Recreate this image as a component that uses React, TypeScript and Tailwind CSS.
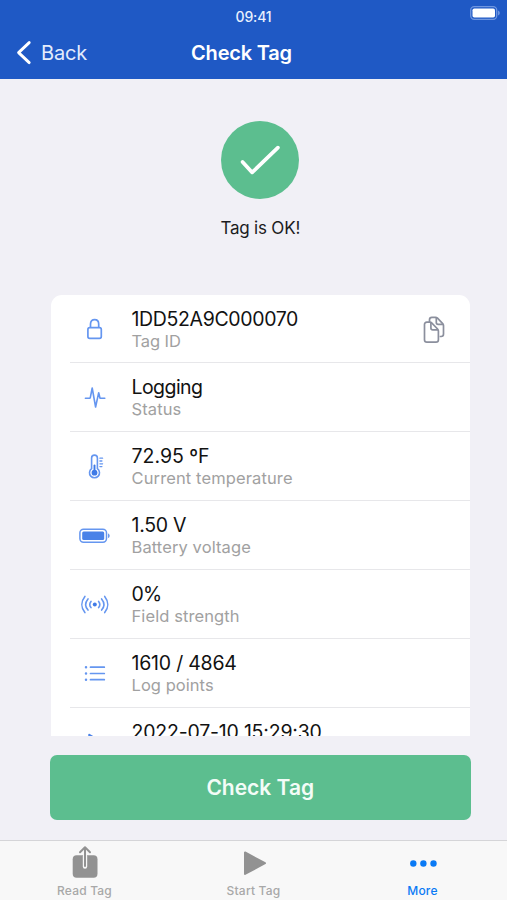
import React from 'react';

function LockIcon() {
  return (
    <svg width="32" height="28" viewBox="0 0 32 28" fill="none" stroke="#6596f0" strokeWidth="1.700">
      <path d="M11.500 12.600V9c0-2.900 1.800-4.400 4.100-4.400S19.700 6.100 19.700 9v3.600" />
      <rect x="8.900" y="12.600" width="13.400" height="10.700" rx="1.800" />
    </svg>
  );
}

function PulseIcon() {
  return (
    <svg width="32" height="28" viewBox="0 0 32 28" fill="none" stroke="#6596f0" strokeWidth="1.600" strokeLinecap="round" strokeLinejoin="round">
      <path d="M6.400 15.300h4.100c.5 0 .7-.2.800-.7L13.200 5l3.400 19 3.100-14.300 1.200 5c.1.400.4.600.8.600h4.100" />
    </svg>
  );
}

function ThermometerIcon() {
  return (
    <svg width="32" height="28" viewBox="0 0 32 28" fill="none" stroke="#6596f0" strokeWidth="1.600" strokeLinecap="round">
      <path d="M12.600 16.700V6a2.900 2.900 0 0 1 5.800 0v10.700a5 5 0 1 1-5.800 0Z" />
      <circle cx="15.500" cy="20.700" r="2.900" fill="#3f7ae6" stroke="none" />
      <path d="M15.500 19v-5.500" stroke="#3f7ae6" strokeWidth="1.900" />
      <path d="M20.900 6.200h2.700M20.900 9h2M20.900 11.800h2.700M20.900 14.600h2" strokeWidth="1.300" />
    </svg>
  );
}

function BatteryIcon() {
  return (
    <svg width="32" height="28" viewBox="0 0 32 28" fill="none">
      <rect x="0.900" y="8.200" width="26.600" height="13" rx="3.600" stroke="#6596f0" strokeWidth="1.500" />
      <rect x="3.200" y="10.500" width="22" height="8.400" rx="1.500" fill="#4a82e8" />
      <path d="M29.100 12.400v4.600c1-.3 1.500-1.300 1.500-2.300s-.5-2-1.500-2.300Z" fill="#5a8dea" />
    </svg>
  );
}

function SignalIcon() {
  return (
    <svg width="32" height="28" viewBox="0 0 32 28" fill="none" stroke="#6596f0" strokeWidth="1.600" strokeLinecap="round">
      <circle cx="15.800" cy="14.500" r="2" fill="#3f7ae6" stroke="none" />
      <path d="M12 11.400c-1.500 1.900-1.500 4.300 0 6.200M19.600 11.400c1.500 1.900 1.500 4.300 0 6.200" />
      <path d="M9 8.900c-2.900 3.500-2.900 7.700 0 11.200M22.600 8.900c2.900 3.500 2.900 7.700 0 11.200" />
      <path d="M5.900 6.400c-4 5-4 11.200 0 16.200M25.700 6.400c4 5 4 11.200 0 16.200" />
    </svg>
  );
}

function ListIcon() {
  return (
    <svg width="32" height="28" viewBox="0 0 32 28" fill="none" stroke="#6596f0" strokeLinecap="round">
      <path d="M11.500 8.200h13.800M11.500 14.500h13.800M11.500 20.700h13.800" strokeWidth="1.700" />
      <path d="M7 8.200h.01M7 14.500h.01M7 20.700h.01" strokeWidth="2.500" />
    </svg>
  );
}

function PlayFilledIcon() {
  return (
    <svg width="32" height="28" viewBox="0 0 32 28" fill="#4a82e8" stroke="#4a82e8" strokeWidth="1.500" strokeLinejoin="round">
      <path d="M10 6.500v16l14-8Z" />
    </svg>
  );
}

function CopyIcon() {
  return (
    <svg width="24" height="28" viewBox="0 0 24 28" fill="none" stroke="#8b8f9d" strokeWidth="1.700" strokeLinejoin="round">
      <path d="M7.500 7V4.700c0-1.600.8-2.400 2.400-2.400h3.600c.8 0 1.400.3 2 .9l5.200 5.400c.6.600.8 1.200.8 2v8.500c0 1.600-.8 2.400-2.400 2.400h-1.500" />
      <path d="M14.300 2.500v5c0 1.300.6 1.900 1.900 1.900h5" />
      <path d="M4.900 7.200h2.900c.9 0 1.500.3 2.100.9l5.700 5.900c.6.600.8 1.200.8 2.100v8.600c0 1.600-.8 2.400-2.400 2.400H4.900c-1.600 0-2.400-.8-2.400-2.400V9.600c0-1.600.8-2.400 2.400-2.400Z" />
      <path d="M8.900 7.500v5.400c0 1.300.6 1.900 1.900 1.900h5.300" />
    </svg>
  );
}

const rows = [
  { title: '1DD52A9C000070', label: 'Tag ID', icon: LockIcon, titleSpacing: 'tracking-[-0.350px]', labelSpacing: 'tracking-[-0.1px]', copy: true },
  { title: 'Logging', label: 'Status', icon: PulseIcon, titleSpacing: 'tracking-[-0.550px]', labelSpacing: 'tracking-[0.1px]' },
  { title: '72.95 ºF', label: 'Current temperature', icon: ThermometerIcon, titleSpacing: 'tracking-[0px]', labelSpacing: 'tracking-[0.120px]' },
  { title: '1.50 V', label: 'Battery voltage', icon: BatteryIcon, titleSpacing: 'tracking-[-0.3px]', labelSpacing: 'tracking-[0.1px]' },
  { title: '0%', label: 'Field strength', icon: SignalIcon, titleSpacing: 'tracking-[-0.8px]', labelSpacing: 'tracking-[0.1px]' },
  { title: '1610 / 4864', label: 'Log points', icon: ListIcon, titleSpacing: 'tracking-[-0.220px]', labelSpacing: 'tracking-[0.050px]' },
  { title: '2022-07-10 15:29:30', icon: PlayFilledIcon, titleSpacing: 'tracking-[-0.2px]' },
];

function Header() {
  return (
    <header className="h-[79px] shrink-0 bg-[#1f59c5] text-white">
      {/* Status bar */}
      <div className="grid h-[26px] grid-cols-3">
        <span className="col-start-2 pt-[7px] text-center text-[14px] leading-5 font-medium tracking-[-0.150px] text-[#e9f0fd]">
          09:41
        </span>
        <svg className="mt-[6px] mr-[6px] justify-self-end" width="31" height="14" viewBox="0 0 31 14" fill="none">
          <rect x="0.700" y="0.700" width="26" height="12.600" rx="3.500" stroke="#6f96e0" strokeWidth="1.300" />
          <rect x="2.500" y="2.500" width="22.500" height="9" rx="1.800" fill="#fff" />
          <path d="M28 4.500v5c1.200-.4 1.800-1.400 1.800-2.500S29.200 4.900 28 4.500Z" fill="#6f96e0" />
        </svg>
      </div>

      {/* Nav bar */}
      <div className="grid h-[53px] grid-cols-[1fr_auto_1fr] items-center">
        <button className="flex items-center pl-4 text-[20px] tracking-[-0.2px] text-[#e3ecfc]">
          <svg width="16" height="26" viewBox="0 0 16 26" fill="none" stroke="#fff" strokeWidth="2.900" strokeLinecap="round" strokeLinejoin="round">
            <path d="M13.200 2.600 2.600 12.600 13.200 22.600" />
          </svg>
          <span className="ml-[9px]">Back</span>
        </button>
        <h1 className="mr-[24px] text-[20px] font-semibold tracking-[-0.2px]">Check Tag</h1>
      </div>
    </header>
  );
}

function TabBar() {
  return (
    <nav className="grid h-[60px] shrink-0 grid-cols-3 border-t border-[#d5d5d8] bg-[#f8f8f8] text-[12px] leading-4 font-medium tracking-[0.2px] text-[#a8a8a8]">
      <button className="flex flex-col items-center">
        <svg className="mt-[4px]" width="28" height="34" viewBox="0 0 28 34" fill="none">
          <rect x="1.700" y="10.200" width="24.800" height="22.500" rx="4" fill="#929292" />
          <path d="M14 11v10.500" stroke="#f8f8f8" strokeWidth="4.400" strokeLinecap="round" />
          <path d="M14 2.500V21M9 7.300l5-5 5 5" stroke="#929292" strokeWidth="2" strokeLinecap="round" strokeLinejoin="round" />
        </svg>
        <span className="mt-[4px]">Read Tag</span>
      </button>
      <button className="flex flex-col items-center">
        <svg className="mt-[4px]" width="28" height="34" viewBox="0 0 28 34">
          <path d="M5 7.500v21.400L25 18.200Z" fill="#929292" stroke="#929292" strokeWidth="2" strokeLinejoin="round" />
        </svg>
        <span className="mt-[4px]">Start Tag</span>
      </button>
      <button className="flex flex-col items-center text-[#0a7af5]">
        <svg className="mt-[4px]" width="28" height="34" viewBox="0 0 28 34" fill="#0a7af5">
          <circle cx="4.300" cy="18.500" r="3.200" />
          <circle cx="14.400" cy="18.500" r="3.200" />
          <circle cx="24.500" cy="18.500" r="3.200" />
        </svg>
        <span className="mt-[4px]">More</span>
      </button>
    </nav>
  );
}

export default function App() {
  return (
    <div className="flex h-[900px] w-[507px] flex-col overflow-hidden bg-[#f1f0f6] font-['Inter','Liberation_Sans',sans-serif]">
      <Header />

      {/* Result */}
      <section className="flex h-[216px] shrink-0 flex-col items-center pt-[42px] pl-[13.500px]">
        <div className="flex size-[78px] items-center justify-center rounded-full bg-[#5cbe8f]">
          <svg width="44" height="34" viewBox="0 0 44 34" fill="none" stroke="#fff" strokeWidth="3.700" strokeLinecap="round" strokeLinejoin="round">
            <path d="M4.600 18.900 14.200 29.400 39.900 4.600" />
          </svg>
        </div>
        <p className="mt-[17px] text-[17px] leading-6 tracking-[-0.2px] text-[#1c1c1e]">Tag is OK!</p>
      </section>

      {/* Details */}
      <ul className="mr-[37px] ml-[51px] h-[441px] shrink-0 overflow-hidden rounded-t-[11px] bg-white">
        {rows.map(({ title, label, icon: Icon, titleSpacing, labelSpacing, copy }) => (
          <li key={title} className="flex h-[69px] pl-[19px] first:h-[68px]">
            <div className="flex flex-1 border-b border-[#e7e7ea] pl-[9px]">
              <div className="flex w-[52.500px] items-center">
                <Icon />
              </div>
              <div className="flex-1 pt-[13px]">
                <p className={`text-[19.500px] leading-[22px] text-[#121212] ${titleSpacing}`}>{title}</p>
                {label && <p className={`text-[16.500px] leading-[22px] text-[#a1a1a1] ${labelSpacing}`}>{label}</p>}
              </div>
              {copy && (
                <button className="mr-[24px]">
                  <CopyIcon />
                </button>
              )}
            </div>
          </li>
        ))}
      </ul>

      <button className="mt-[19px] mr-[36px] mb-[20px] ml-[49.500px] h-[65px] shrink-0 rounded-[7px] bg-[#5cbe8f] text-[21px] font-semibold text-[#f3fcf7]">
        Check Tag
      </button>

      <TabBar />
    </div>
  );
}
